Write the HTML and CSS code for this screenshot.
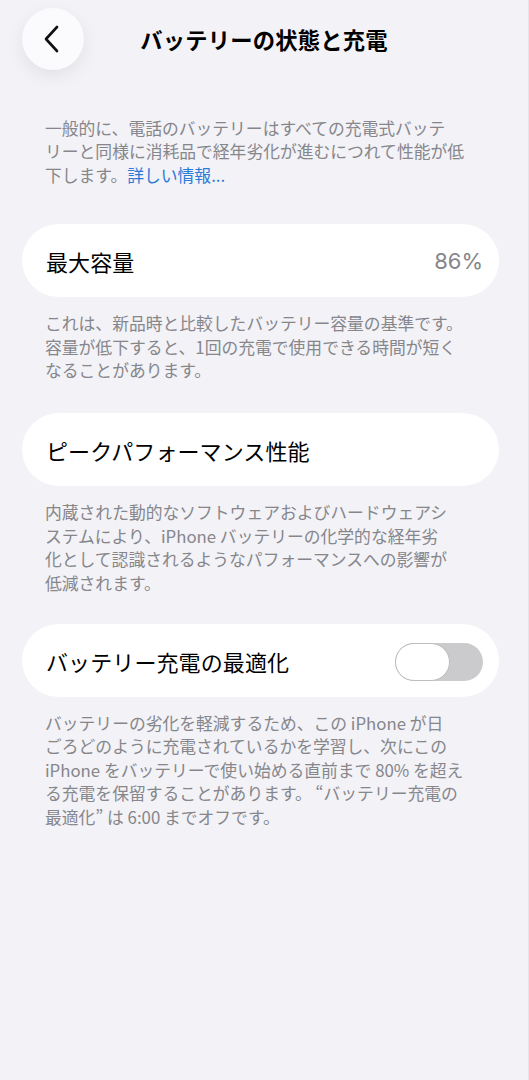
FILE: index.html
```html
<!DOCTYPE html>
<html lang="ja">
<head>
<meta charset="utf-8">
<title>バッテリーの状態と充電</title>
<link rel="stylesheet" href="styles.css">
</head>
<body>
<div class="screen">
  <header class="nav">
    <button class="back" aria-label="戻る">
      <svg width="22" height="30" viewBox="0 0 22 30"><path d="M16 3 L5 15 L16 27" fill="none" stroke="#111" stroke-width="2.6" stroke-linecap="round" stroke-linejoin="round"/></svg>
    </button>
    <h1 class="title">バッテリーの状態と充電</h1>
    <span class="spacer"></span>
  </header>

  <main class="content">
    <p class="note intro">一般的に、電話のバッテリーはすべての充電式バッテ<br>リーと同様に消耗品で経年劣化が進むにつれて性能が低<br>下します。<a class="link" href="#">詳しい情報...</a></p>

    <section class="group capacity">
      <div class="cell">
        <span class="label">最大容量</span>
        <span class="value">86%</span>
      </div>
      <p class="note">これは、新品時と比較したバッテリー容量の基準です。<br>容量が低下すると、1回の充電で使用できる時間が短く<br>なることがあります。</p>
    </section>

    <section class="group">
      <div class="cell">
        <span class="label">ピークパフォーマンス性能</span>
      </div>
      <p class="note">内蔵された動的なソフトウェアおよびハードウェアシ<br>ステムにより、iPhone バッテリーの化学的な経年劣<br>化として認識されるようなパフォーマンスへの影響が<br>低減されます。</p>
    </section>

    <section class="group">
      <div class="cell">
        <span class="label">バッテリー充電の最適化</span>
        <span class="toggle"><span class="knob"></span></span>
      </div>
      <p class="note">バッテリーの劣化を軽減するため、この iPhone が日<br>ごろどのように充電されているかを学習し、次にこの<br>iPhone をバッテリーで使い始める直前まで 80% を超え<br>る充電を保留することがあります。 “バッテリー充電の<br>最適化” は 6:00 までオフです。</p>
    </section>
  </main>
</div>
</body>
</html>
```

FILE: styles.css
```css
html, body {
  margin: 0;
  padding: 0;
  background: #f2f2f7;
}

body {
  font-family: "Noto Sans CJK JP", "Noto Sans", sans-serif;
  color: #000;
  -webkit-font-smoothing: antialiased;
}

.screen {
  width: 529px;
  min-height: 1080px;
  box-sizing: border-box;
  border-right: 1px solid #e4e4ea;
}

/* navigation bar */
.nav {
  display: grid;
  grid-template-columns: 62px 1fr 62px;
  align-items: center;
  padding: 8px 29px 0 22px;
}

.back {
  width: 62px;
  height: 62px;
  border: 0;
  border-radius: 50%;
  background: #fbfbfd;
  box-shadow: 0 6px 18px rgba(0, 0, 0, 0.07);
  display: flex;
  align-items: center;
  justify-content: center;
  padding: 0 2px 0 0;
  cursor: pointer;
}

.title {
  margin: 0;
  text-align: center;
  font-size: 22.3px;
  font-weight: 700;
  letter-spacing: 0.2px;
  padding-left: 7px;
}

/* body */
.content {
  padding: 47px 29px 0 22px;
}

.note {
  margin: 0;
  padding: 0 0 0 23px;
  font-size: 16.8px;
  line-height: 23.4px;
  color: #86868b;
  white-space: nowrap;
}

.intro {
  margin-bottom: 37px;
}

.link {
  color: #2a7bd8;
  text-decoration: none;
}

.group {
  margin-bottom: 29px;
}

.group.capacity {
  margin-bottom: 31px;
}

.cell {
  height: 73px;
  background: #fff;
  border-radius: 37px;
  display: flex;
  align-items: center;
  justify-content: space-between;
  padding: 0 16px 0 24px;
  margin-bottom: 15px;
}

.label {
  font-size: 22px;
  letter-spacing: 0.1px;
}

.value {
  font-family: "Inter", "Noto Sans", sans-serif;
  font-size: 22px;
  color: #86868b;
}

/* switch, off state */
.toggle {
  width: 88px;
  height: 38px;
  border-radius: 19px;
  background: #cbcbcd;
  display: flex;
  align-items: center;
  margin-top: 3px;
}

.knob {
  width: 55px;
  height: 38px;
  box-sizing: border-box;
  border-radius: 19px;
  background: #fff;
  border: 1.5px solid #bdbdc0;
}
```
